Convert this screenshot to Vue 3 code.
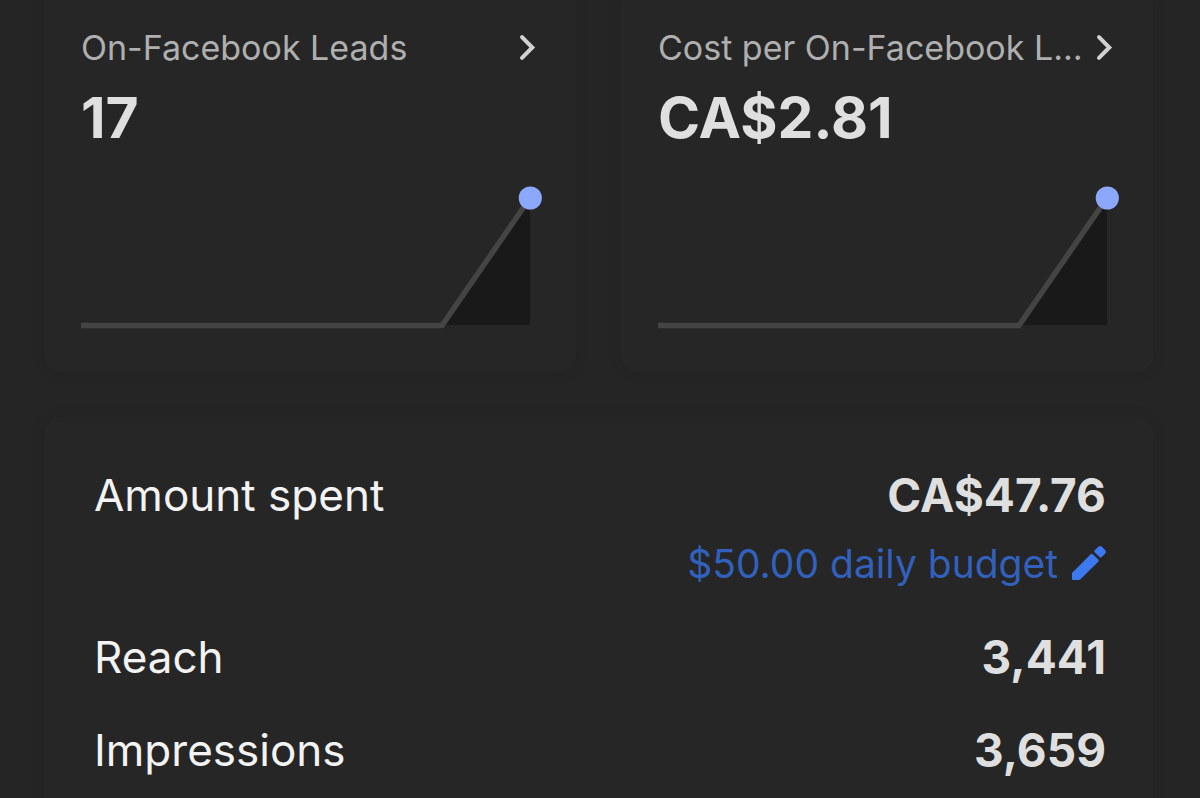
<script setup>
const metrics = [
  { label: 'On-Facebook Leads', value: '17' },
  { label: 'Cost per On-Facebook Leads', value: 'CA$2.81' },
]
const totals = [
  { label: 'Amount spent', value: 'CA$47.76', budget: '$50.00 daily budget' },
  { label: 'Reach', value: '3,441' },
  { label: 'Impressions', value: '3,659' },
]
</script>

<template>
  <main class="page">
    <section class="cards">
      <article v-for="m in metrics" :key="m.label" class="card">
        <button class="head" type="button">
          <span class="label">{{ m.label }}</span>
          <svg class="chevron" viewBox="0 0 18 28" aria-hidden="true">
            <path d="M3 3.2 13.3 13.500 3 23.8" />
          </svg>
        </button>
        <strong class="value">{{ m.value }}</strong>
        <svg class="chart" viewBox="0 0 461 146" aria-hidden="true">
          <path class="area" d="M360 141 449 14V141Z" />
          <path class="line" d="M0 141.500H361L449 14" />
          <circle cx="449.300" cy="14" r="11.600" />
        </svg>
      </article>
    </section>
    <dl class="panel">
      <div v-for="t in totals" :key="t.label" class="row">
        <dt>{{ t.label }}</dt>
        <dd>
          <span class="amount">{{ t.value }}</span>
          <button v-if="t.budget" class="budget" type="button">
            <span>{{ t.budget }}</span>
            <svg class="pencil" viewBox="-1 1 36 36" aria-hidden="true">
              <path d="M1 28 19.700 9.300Q20.800 8.300 21.900 9.300L27.200 14.600Q28.200 15.700 27.200 16.800L9.500 34.300Q8.700 35 7.700 35H2Q1 35 1 34Z" />
              <path d="M23.700 5.200 27.400 1.700Q29.300 0.200 31.100 1.900L34.100 4.900Q35.800 6.700 34.200 8.600L30.800 12.100Q29.700 13 28.600 12L23.700 7.200Q22.800 6.200 23.700 5.200Z" />
            </svg>
          </button>
        </dd>
      </div>
    </dl>
  </main>
</template>

<style>
body {
  margin: 0;
  background: #252525;
}
</style>

<style scoped>
.page {
  box-sizing: border-box;
  min-height: 100vh;
  padding: 0 47px 0 44px;
  overflow: hidden;
  background: #252525;
  color: #f3f3f3;
  font-family: Inter, "Liberation Sans", sans-serif;
}
.cards {
  display: grid;
  grid-template-columns: repeat(2, minmax(0, 1fr));
  gap: 45px;
}
.card,
.panel {
  background: #262626;
  box-shadow: 0 0 10px #232323;
}
.card {
  display: flex;
  flex-direction: column;
  padding: 28px 34px 42px 37px;
  border-radius: 0 0 16px 16px;
}
button {
  padding: 0;
  border: 0;
  background: none;
  font-family: inherit;
  cursor: pointer;
}
.head {
  display: flex;
  align-items: center;
  justify-content: space-between;
  padding-right: 5px;
  gap: 6px;
  color: #afafaf;
  font-size: 34px;
  line-height: 40px;
  text-align: left;
}
.label {
  min-width: 0;
  overflow: hidden;
  text-overflow: ellipsis;
  white-space: nowrap;
}
.chevron {
  flex: none;
  width: 18px;
  height: 28px;
  fill: none;
  stroke: #d2d2d2;
  stroke-width: 4;
  stroke-linecap: round;
}
.value {
  margin-top: 16px;
  color: #dfdfdf;
  font-size: 57px;
  font-weight: 700;
  line-height: 68px;
}
.chart {
  display: block;
  width: 100%;
  margin-top: 32px;
}
.area {
  fill: #191919;
}
.line {
  fill: none;
  stroke: #444444;
  stroke-width: 5.500;
}
circle {
  fill: #8ba8fa;
}
.panel {
  display: grid;
  gap: 37px;
  margin: 45px 0 0;
  padding: 50px 47px 48px 50px;
  border-radius: 16px 16px 0 0;
}
.row {
  display: flex;
  justify-content: space-between;
  line-height: 56px;
}
dt {
  font-size: 44px;
}
dd {
  display: flex;
  flex-direction: column;
  align-items: flex-end;
  gap: 13px;
  margin: 0;
}
.amount {
  color: #dfdfdf;
  font-size: 46px;
  font-weight: 700;
}
.budget {
  display: flex;
  align-items: center;
  gap: 12px;
  color: #3260bd;
  font-size: 39px;
  line-height: 56px;
}
.pencil {
  width: 36px;
  height: 36px;
  overflow: visible;
  fill: #3c78ee;
}
</style>
